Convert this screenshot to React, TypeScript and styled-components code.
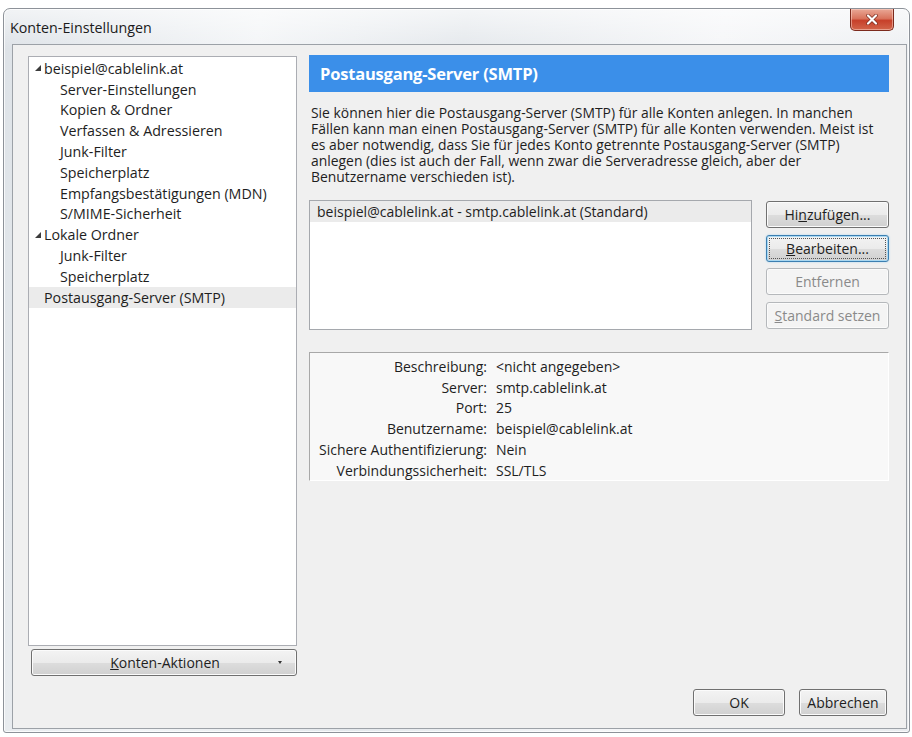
import React from 'react';
import styled, { createGlobalStyle, css } from 'styled-components';

const GlobalStyle = createGlobalStyle`
  html, body {
    margin: 0;
    padding: 0;
    background: #ffffff;
  }
  body {
    font-family: "Open Sans", "Noto Sans", sans-serif;
    font-size: 14px;
    color: #1e1e1e;
  }
`;

const Page = styled.div`
  padding: 8px 2px 4px 3px;
`;

const Window = styled.div`
  box-sizing: border-box;
  height: 725px;
  display: flex;
  flex-direction: column;
  border: 1px solid #8d9299;
  border-radius: 7px 7px 3px 3px;
  padding: 0 2px 3px 8px;
  background:
    linear-gradient(180deg, rgba(255, 255, 255, 0.6) 0%, rgba(255, 255, 255, 0) 40px),
    linear-gradient(100deg, #dde2e7 0%, #f3f5f7 25%, #e4e8ec 45%, #f5f6f8 70%, #e9ecef 100%);
  box-shadow: inset 0 0 0 1px rgba(255, 255, 255, 0.75);
`;

const TitleBar = styled.div`
  height: 35px;
  display: flex;
  justify-content: space-between;
  align-items: flex-start;
`;

const Title = styled.div`
  padding: 9px 0 0 0;
  margin-left: -2px;
  font-size: 14.25px;
  color: #1b1b1b;
`;

const CloseButton = styled.div`
  width: 42px;
  height: 21px;
  margin-right: 13px;
  display: flex;
  align-items: center;
  justify-content: center;
  border: 1px solid #7c2a1d;
  border-top: none;
  border-radius: 0 0 5px 5px;
  background: linear-gradient(180deg, #e9a896 0%, #d9745d 45%, #c7402a 55%, #d2654a 100%);
  box-shadow: inset 0 0 0 1px rgba(255, 220, 210, 0.5);
`;

const Client = styled.div`
  flex: 1;
  display: flex;
  flex-direction: column;
  border: 1px solid #9ca1a7;
  background: #f0f0f0;
  padding: 11px 17px 12px 15px;
`;

const Main = styled.div`
  flex: 1;
  display: flex;
  gap: 12px;
`;

const LeftColumn = styled.div`
  width: 269px;
  display: flex;
  flex-direction: column;
`;

const Tree = styled.div`
  flex: 1;
  background: #ffffff;
  border: 1px solid #abadb3;
  padding-top: 1px;
  font-size: 14.25px;
`;

const TreeItem = styled.div<{ $level: number; $selected?: boolean; $expander?: boolean }>`
  height: 20.8px;
  display: flex;
  align-items: center;
  gap: 3px;
  padding-left: ${(p) => (p.$level === 1 ? 31 : p.$expander ? 6 : 15)}px;
  background: ${(p) => (p.$selected ? '#ebebeb' : 'transparent')};
  white-space: nowrap;
`;

const Expander = () => (
  <svg width="6" height="6" viewBox="0 0 6 6">
    <polygon points="6,0 6,6 0,6" fill="#3c3c3c" />
  </svg>
);

const RightColumn = styled.div`
  flex: 1;
  display: flex;
  flex-direction: column;
`;

const Header = styled.div`
  height: 37px;
  margin-top: -1px;
  display: flex;
  align-items: center;
  padding-left: 11px;
  background: #3b8fe9;
  color: #ffffff;
  font-weight: 700;
  font-size: 16.5px;
  letter-spacing: -0.2px;
`;

const Intro = styled.p`
  margin: 13px 0 0 2px;
  font-size: 13.9px;
  line-height: 16px;
  white-space: nowrap;
`;

const ListRow = styled.div`
  margin-top: 15px;
  display: flex;
  gap: 14px;
`;

const ServerList = styled.div`
  flex: 1;
  height: 130px;
  box-sizing: border-box;
  background: #ffffff;
  border: 1px solid #a5a8ad;
`;

const ServerRow = styled.div<{ $selected?: boolean }>`
  height: 21px;
  display: flex;
  align-items: center;
  padding-left: 7px;
  background: ${(p) => (p.$selected ? '#ebebeb' : 'transparent')};
`;

const ButtonStack = styled.div`
  width: 123px;
  display: flex;
  flex-direction: column;
  gap: 6.5px;
  padding-top: 1px;
`;

type Variant = 'normal' | 'focused' | 'disabled';

const PushButton = styled.button<{ $variant?: Variant; $width?: number }>`
  box-sizing: border-box;
  height: 27px;
  width: ${(p) => (p.$width ? `${p.$width}px` : '100%')};
  padding: 0 4px;
  font-family: inherit;
  font-size: 14px;
  color: #1e1e1e;
  border: 1px solid #707070;
  border-radius: 3px;
  background: linear-gradient(180deg, #f3f3f3 0%, #ebebeb 50%, #dddddd 51%, #d0d0d0 100%);
  box-shadow: inset 0 0 0 1px #fbfbfb;
  white-space: nowrap;
  ${(p) =>
    p.$variant === 'focused' &&
    css`
      border-color: #3c7fb1;
      box-shadow: inset 0 0 0 1px #a9d8f2, 0 0 2px #9fd0ee;
      outline: 1px dotted #555;
      outline-offset: -4px;
    `}
  ${(p) =>
    p.$variant === 'disabled' &&
    css`
      color: #8a8a8a;
      border-color: #b5b8bb;
      background: #f4f4f4;
      box-shadow: inset 0 0 0 1px #fbfbfb;
    `}
`;

const Details = styled.div`
  margin-top: 22px;
  height: 129px;
  box-sizing: border-box;
  display: grid;
  grid-template-columns: max-content 1fr;
  grid-auto-rows: 20.8px;
  column-gap: 9px;
  align-content: start;
  padding: 3px 0 0 9px;
  background: #f8f8f8;
  border-top: 1px solid #a8a8a8;
  border-left: 1px solid #a8a8a8;
  border-right: 1px solid #ffffff;
  border-bottom: 1px solid #ffffff;
`;

const Label = styled.div`
  text-align: right;
  white-space: nowrap;
  align-self: center;
`;

const Value = styled.div`
  white-space: nowrap;
  align-self: center;
`;

const ActionButton = styled(PushButton)`
  margin: 3px 0 0 3px;
  width: 266px;
  display: flex;
  align-items: center;
  padding: 0 14px 0 20px;
`;

const ActionLabel = styled.span`
  flex: 1;
  text-align: center;
`;

const DropArrow = styled.span`
  width: 0;
  height: 0;
  border-left: 2px solid transparent;
  border-right: 2px solid transparent;
  border-top: 3px solid #333;
`;

const Footer = styled.div`
  margin-top: 13px;
  display: flex;
  justify-content: flex-end;
  gap: 14px;
  padding-right: 2px;
`;

const treeItems: { label: string; level: number; expander?: boolean; selected?: boolean }[] = [
  { label: 'beispiel@cablelink.at', level: 0, expander: true },
  { label: 'Server-Einstellungen', level: 1 },
  { label: 'Kopien & Ordner', level: 1 },
  { label: 'Verfassen & Adressieren', level: 1 },
  { label: 'Junk-Filter', level: 1 },
  { label: 'Speicherplatz', level: 1 },
  { label: 'Empfangsbestätigungen (MDN)', level: 1 },
  { label: 'S/MIME-Sicherheit', level: 1 },
  { label: 'Lokale Ordner', level: 0, expander: true },
  { label: 'Junk-Filter', level: 1 },
  { label: 'Speicherplatz', level: 1 },
  { label: 'Postausgang-Server (SMTP)', level: 0, selected: true },
];

const details: [string, string][] = [
  ['Beschreibung:', '<nicht angegeben>'],
  ['Server:', 'smtp.cablelink.at'],
  ['Port:', '25'],
  ['Benutzername:', 'beispiel@cablelink.at'],
  ['Sichere Authentifizierung:', 'Nein'],
  ['Verbindungssicherheit:', 'SSL/TLS'],
];

export default function App() {
  return (
    <>
      <GlobalStyle />
      <Page>
        <Window>
          <TitleBar>
            <Title>Konten-Einstellungen</Title>
            <CloseButton>
              <svg width="12" height="11" viewBox="0 0 12 11">
                <path d="M2 1.5 L10 9.5 M10 1.5 L2 9.5" stroke="#7a2a1c" strokeWidth="3.6" strokeLinecap="round" />
                <path d="M2 1.5 L10 9.5 M10 1.5 L2 9.5" stroke="#ffffff" strokeWidth="2.2" strokeLinecap="round" />
              </svg>
            </CloseButton>
          </TitleBar>
          <Client>
            <Main>
              <LeftColumn>
                <Tree>
                  {treeItems.map((item, i) => (
                    <TreeItem key={i} $level={item.level} $expander={item.expander} $selected={item.selected}>
                      {item.expander && <Expander />}
                      {item.label}
                    </TreeItem>
                  ))}
                </Tree>
                <ActionButton>
                  <ActionLabel>
                    <u>K</u>onten-Aktionen
                  </ActionLabel>
                  <DropArrow />
                </ActionButton>
              </LeftColumn>
              <RightColumn>
                <Header>Postausgang-Server (SMTP)</Header>
                <Intro>
                  Sie können hier die Postausgang-Server (SMTP) für alle Konten anlegen. In manchen
                  <br />
                  Fällen kann man einen Postausgang-Server (SMTP) für alle Konten verwenden. Meist ist
                  <br />
                  es aber notwendig, dass Sie für jedes Konto getrennte Postausgang-Server (SMTP)
                  <br />
                  anlegen (dies ist auch der Fall, wenn zwar die Serveradresse gleich, aber der
                  <br />
                  Benutzername verschieden ist).
                </Intro>
                <ListRow>
                  <ServerList>
                    <ServerRow $selected>beispiel@cablelink.at - smtp.cablelink.at (Standard)</ServerRow>
                  </ServerList>
                  <ButtonStack>
                    <PushButton>
                      Hi<u>n</u>zufügen...
                    </PushButton>
                    <PushButton $variant="focused">
                      <u>B</u>earbeiten...
                    </PushButton>
                    <PushButton $variant="disabled">Entfernen</PushButton>
                    <PushButton $variant="disabled">
                      <u>S</u>tandard setzen
                    </PushButton>
                  </ButtonStack>
                </ListRow>
                <Details>
                  {details.map(([label, value]) => (
                    <React.Fragment key={label}>
                      <Label>{label}</Label>
                      <Value>{value}</Value>
                    </React.Fragment>
                  ))}
                </Details>
              </RightColumn>
            </Main>
            <Footer>
              <PushButton $width={92}>OK</PushButton>
              <PushButton $width={88}>Abbrechen</PushButton>
            </Footer>
          </Client>
        </Window>
      </Page>
    </>
  );
}
